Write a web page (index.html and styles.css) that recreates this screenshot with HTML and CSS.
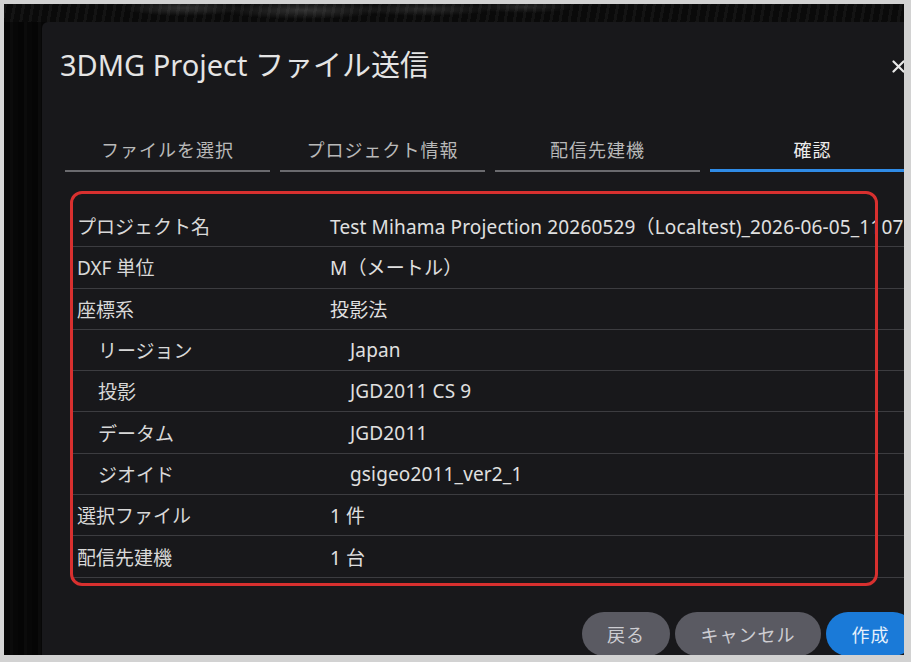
FILE: index.html
```html
<!DOCTYPE html>
<html lang="ja">
<head>
<meta charset="utf-8">
<title>3DMG Project ファイル送信</title>
<link rel="stylesheet" href="styles.css">
</head>
<body>
<div class="screen">
  <div class="backdrop"></div>
  <div class="stage">
    <div class="gutter"></div>
    <section class="dialog">
      <header class="dlg-head">
        <h1 class="dlg-title">3DMG Project ファイル送信</h1>
        <span class="close" aria-label="閉じる">
          <svg width="13" height="13" viewBox="0 0 13 13"><path d="M1.5 1.5 L11.5 11.5 M11.5 1.5 L1.5 11.5" stroke="#e8e8e8" stroke-width="2.2" stroke-linecap="round"/></svg>
        </span>
      </header>
      <nav class="tabs">
        <div class="tab">ファイルを選択</div>
        <div class="tab">プロジェクト情報</div>
        <div class="tab">配信先建機</div>
        <div class="tab is-active">確認</div>
      </nav>
      <div class="summary">
        <div class="row"><span class="k">プロジェクト名</span><span class="v">Test Mihama Projection 20260529（Localtest)_2026-06-05_1107</span></div>
        <div class="row"><span class="k">DXF 単位</span><span class="v">M（メートル）</span></div>
        <div class="row"><span class="k">座標系</span><span class="v">投影法</span></div>
        <div class="row sub"><span class="k">リージョン</span><span class="v">Japan</span></div>
        <div class="row sub"><span class="k">投影</span><span class="v">JGD2011 CS 9</span></div>
        <div class="row sub"><span class="k">データム</span><span class="v">JGD2011</span></div>
        <div class="row sub"><span class="k">ジオイド</span><span class="v">gsigeo2011_ver2_1</span></div>
        <div class="row"><span class="k">選択ファイル</span><span class="v">1 件</span></div>
        <div class="row"><span class="k">配信先建機</span><span class="v">1 台</span></div>
        <div class="mark"></div>
      </div>
      <footer class="actions">
        <button class="btn btn-back">戻る</button>
        <button class="btn btn-cancel">キャンセル</button>
        <button class="btn btn-primary">作成</button>
      </footer>
    </section>
  </div>
</div>
</body>
</html>
```
FILE: styles.css
```css
html, body {
  margin: 0;
  padding: 0;
}
body {
  background: #d2d2d2;
  width: 911px;
  height: 662px;
  overflow: hidden;
  font-family: "Noto Sans", "Noto Sans CJK JP", sans-serif;
}
.screen {
  margin: 4px 0 0 4px;
  width: 900px;
  height: 651px;
  background: #060606;
  overflow: hidden;
  display: flex;
  flex-direction: column;
}
.backdrop {
  height: 18px;
  flex: none;
  background:
    radial-gradient(ellipse 60px 8px at 180px 4px, rgba(120,120,120,0.35), transparent),
    radial-gradient(ellipse 80px 9px at 300px 6px, rgba(140,140,140,0.3), transparent),
    radial-gradient(ellipse 70px 7px at 420px 5px, rgba(110,110,110,0.3), transparent),
    radial-gradient(ellipse 50px 6px at 520px 3px, rgba(120,120,120,0.25), transparent),
    repeating-linear-gradient(100deg, rgba(255,255,255,0.04) 0 3px, transparent 3px 9px),
    #0a0a0a;
}
.stage {
  flex: 1;
  display: flex;
  min-height: 0;
}
.gutter {
  width: 38px;
  flex: none;
  background:
    repeating-linear-gradient(90deg, #050505 0 6px, #0b0b0b 6px 9px, #070707 9px 14px),
    #060606;
}
.dialog {
  flex: none;
  width: 855px;
  padding: 24px 18px 0 18px;
  background: #18181b;
  border-top-left-radius: 6px;
  color: #d8d8d8;
  display: flex;
  flex-direction: column;
}
.dlg-head {
  display: flex;
  align-items: center;
  justify-content: space-between;
  height: 40px;
}
.dlg-title {
  margin: 0;
  font-weight: 400;
  font-size: 29px;
  line-height: 38px;
  color: #e4e4e4;
}
.close {
  display: flex;
  margin-right: 10px;
  margin-top: 2px;
}
.tabs {
  display: flex;
  gap: 10px;
  margin: 53px 0 0 5px;
}
.tab {
  width: 205px;
  flex: none;
  text-align: center;
  font-size: 18px;
  line-height: 26px;
  letter-spacing: 1px;
  color: #b9b9b9;
  padding-bottom: 7px;
  border-bottom: 2px solid #6a6a6e;
}
.tab.is-active {
  color: #ececec;
  border-bottom: 3px solid #2f8be6;
  padding-bottom: 6px;
}
.summary {
  position: relative;
  margin: 34px 0 0 12px;
  width: 860px;
}
.row {
  display: flex;
  align-items: center;
  height: 40.3px;
  border-bottom: 1px solid #3c3c40;
  font-size: 19px;
  white-space: nowrap;
}
.row .k {
  width: 253px;
  flex: none;
  padding-left: 5px;
  color: #d8d8d8;
}
.row .v {
  color: #e0e0e0;
  letter-spacing: 0.15px;
}
.row.sub .k {
  width: 232px;
  padding-left: 26px;
}
.row.sub .v {
  padding-left: 20px;
}
.mark {
  position: absolute;
  left: -2px;
  top: -15px;
  width: 808px;
  height: 395px;
  box-sizing: border-box;
  border: 3px solid #d8302f;
  border-radius: 12px;
  pointer-events: none;
}
.actions {
  display: flex;
  justify-content: flex-end;
  gap: 5px;
  margin-top: 34px;
}
.btn {
  height: 44px;
  flex: none;
  border: none;
  border-radius: 22px;
  font-family: "Noto Sans", "Noto Sans CJK JP", sans-serif;
  font-size: 18px;
  letter-spacing: 1px;
  color: #cdcdd2;
  background: #5a5a62;
  padding: 0;
}
.btn-back { width: 88px; }
.btn-cancel { width: 146px; }
.btn-primary {
  width: 89px;
  background: #1a7ad8;
  color: #e6f0fb;
}
```
